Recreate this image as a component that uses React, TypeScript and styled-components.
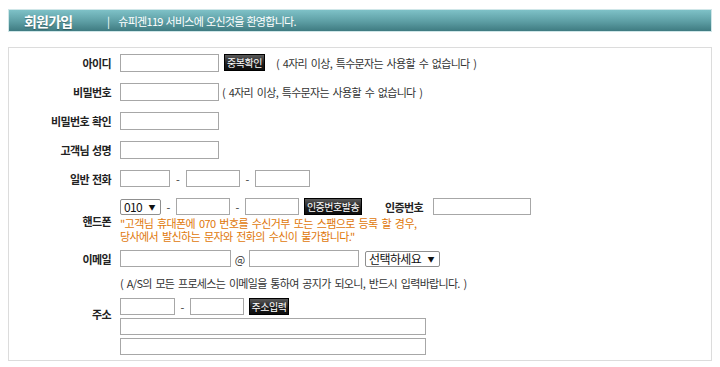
import React from "react";
import styled, { createGlobalStyle } from "styled-components";

const GlobalStyle = createGlobalStyle`
  body {
    margin: 0;
    background: #fff;
    font-family: "Noto Sans CJK KR", "Noto Sans", sans-serif;
    font-size: 11px;
    color: #333;
  }
`;

const Page = styled.div`
  width: 704px;
  padding: 9px 8px 6px;
`;

const Header = styled.div`
  height: 23px;
  box-sizing: border-box;
  display: flex;
  align-items: center;
  padding-left: 15px;
  border: 1px solid #cfe6e8;
  background: linear-gradient(#7ec1c7, #5d9ea4 55%, #3f7b81);
  color: #fff;
`;

const Title = styled.h1`
  width: 83px;
  margin: 0;
  font-size: 14px;
  font-weight: 700;
  letter-spacing: -0.8px;
  text-shadow: 0 1px 1px rgba(0, 0, 0, 0.3);
`;

const Welcome = styled.span`
  font-size: 11px;
  letter-spacing: -0.7px;
  word-spacing: 1px;

  &::before {
    content: "|";
    margin-right: 9px;
  }
`;

const FormBox = styled.div`
  margin-top: 15px;
  border: 1px solid #dcdcdc;
  padding: 0 0 5px;
`;

const Row = styled.div<{ $min?: number; $pad?: string }>`
  display: grid;
  grid-template-columns: 102px 1fr;
  column-gap: 9px;
  align-items: center;
  min-height: ${(p) => p.$min ?? 29}px;
  padding: ${(p) => p.$pad ?? "0"};
`;

const Label = styled.label<{ $top?: number }>`
  text-align: right;
  font-weight: 700;
  color: #222;
  letter-spacing: -0.6px;
  word-spacing: 1px;
  white-space: nowrap;
  ${(p) => (p.$top !== undefined ? `align-self: start; margin-top: ${p.$top}px;` : "")}
`;

const Stack = styled.div`
  display: flex;
  flex-direction: column;
  gap: 3px;
`;

const Line = styled.div`
  display: flex;
  align-items: center;
`;

const Input = styled.input<{ $w: number; $h?: number }>`
  width: ${(p) => p.$w}px;
  height: ${(p) => p.$h ?? 18}px;
  box-sizing: border-box;
  margin: 0;
  padding: 0 3px;
  border: 1px solid #a7a7a7;
  background: #fff;
  font: inherit;
`;

const Joiner = styled.span<{ $w?: number }>`
  width: ${(p) => p.$w ?? 16}px;
  text-align: center;
  color: #333;
`;

const DarkButton = styled.button<{ $w: number }>`
  width: ${(p) => p.$w}px;
  height: 17px;
  margin: 0 0 0 5px;
  padding: 0;
  border: 1px solid #000;
  background: linear-gradient(#5a5a5a, #1c1c1c 60%, #0e0e0e);
  color: #fff;
  font: inherit;
  font-size: 10px;
  letter-spacing: -0.5px;
  white-space: nowrap;
`;

const Note = styled.span<{ $ml?: number }>`
  margin-left: ${(p) => p.$ml ?? 0}px;
  letter-spacing: -0.7px;
  word-spacing: 2px;
  color: #333;
  white-space: nowrap;
`;

const Warnings = styled.div`
  margin-top: 2px;
  color: #e0780a;
  line-height: 13px;
  letter-spacing: -0.6px;
  word-spacing: 2px;
  white-space: nowrap;
`;

const SubLabel = styled.span`
  margin: 0 10px 0 23px;
  font-weight: 700;
  color: #222;
  letter-spacing: -0.6px;
`;

const FakeSelect = styled.div<{ $w: number }>`
  width: ${(p) => p.$w}px;
  height: 16px;
  box-sizing: border-box;
  display: flex;
  align-items: center;
  justify-content: space-between;
  padding: 0 5px 0 3px;
  border: 1px solid #8f8f8f;
  border-radius: 2px;
  background: #fff;
  color: #111;
  font-size: 12px;
  letter-spacing: -0.6px;

  &::after {
    content: "▼";
    font-size: 7px;
  }
`;

const phoneNotice = [
  "\"고객님 휴대폰에 070 번호를 수신거부 또는 스팸으로 등록 할 경우,",
  "당사에서 발신하는 문자와 전화의 수신이 불가합니다.\"",
];

export default function App() {
  return (
    <Page>
      <GlobalStyle />
      <Header>
        <Title>회원가입</Title>
        <Welcome>슈피겐119 서비스에 오신것을 환영합니다.</Welcome>
      </Header>

      <FormBox>
        <Row>
          <Label>아이디</Label>
          <Line>
            <Input $w={99} />
            <DarkButton $w={41}>중복확인</DarkButton>
            <Note $ml={11}>( 4자리 이상, 특수문자는 사용할 수 없습니다 )</Note>
          </Line>
        </Row>

        <Row>
          <Label>비밀번호</Label>
          <Line>
            <Input $w={99} type="password" />
            <Note $ml={3}>( 4자리 이상, 특수문자는 사용할 수 없습니다 )</Note>
          </Line>
        </Row>

        <Row>
          <Label>비밀번호 확인</Label>
          <Line>
            <Input $w={99} type="password" />
          </Line>
        </Row>

        <Row>
          <Label>고객님 성명</Label>
          <Line>
            <Input $w={99} />
          </Line>
        </Row>

        <Row>
          <Label>일반 전화</Label>
          <Line>
            <Input $w={50} $h={17} />
            <Joiner>-</Joiner>
            <Input $w={54} $h={17} />
            <Joiner $w={15}>-</Joiner>
            <Input $w={55} $h={17} />
          </Line>
        </Row>

        <Row $pad="5px 0 1px">
          <Label>핸드폰</Label>
          <div>
            <Line>
              <FakeSelect $w={41}>010</FakeSelect>
              <Joiner $w={15}>-</Joiner>
              <Input $w={54} $h={17} />
              <Joiner $w={15}>-</Joiner>
              <Input $w={54} $h={17} />
              <DarkButton $w={58}>인증번호발송</DarkButton>
              <SubLabel>인증번호</SubLabel>
              <Input $w={98} $h={17} />
            </Line>
            <Warnings>
              {phoneNotice.map((line) => (
                <div key={line}>{line}</div>
              ))}
            </Warnings>
          </div>
        </Row>

        <Row>
          <Label>이메일</Label>
          <Line>
            <Input $w={111} $h={17} />
            <Joiner $w={18}>@</Joiner>
            <Input $w={110} $h={17} />
            <Joiner $w={6} />
            <FakeSelect $w={75}>선택하세요</FakeSelect>
          </Line>
        </Row>

        <Row $min={20}>
          <span />
          <Note>( A/S의 모든 프로세스는 이메일을 통하여 공지가 되오니, 반드시 입력바랍니다. )</Note>
        </Row>

        <Row $pad="5px 0 0">
          <Label $top={8}>주소</Label>
          <Stack>
            <Line>
              <Input $w={55} $h={17} />
              <Joiner $w={15}>-</Joiner>
              <Input $w={54} $h={17} />
              <DarkButton $w={40}>주소입력</DarkButton>
            </Line>
            <Input $w={306} $h={17} />
            <Input $w={306} $h={17} />
          </Stack>
        </Row>
      </FormBox>
    </Page>
  );
}
